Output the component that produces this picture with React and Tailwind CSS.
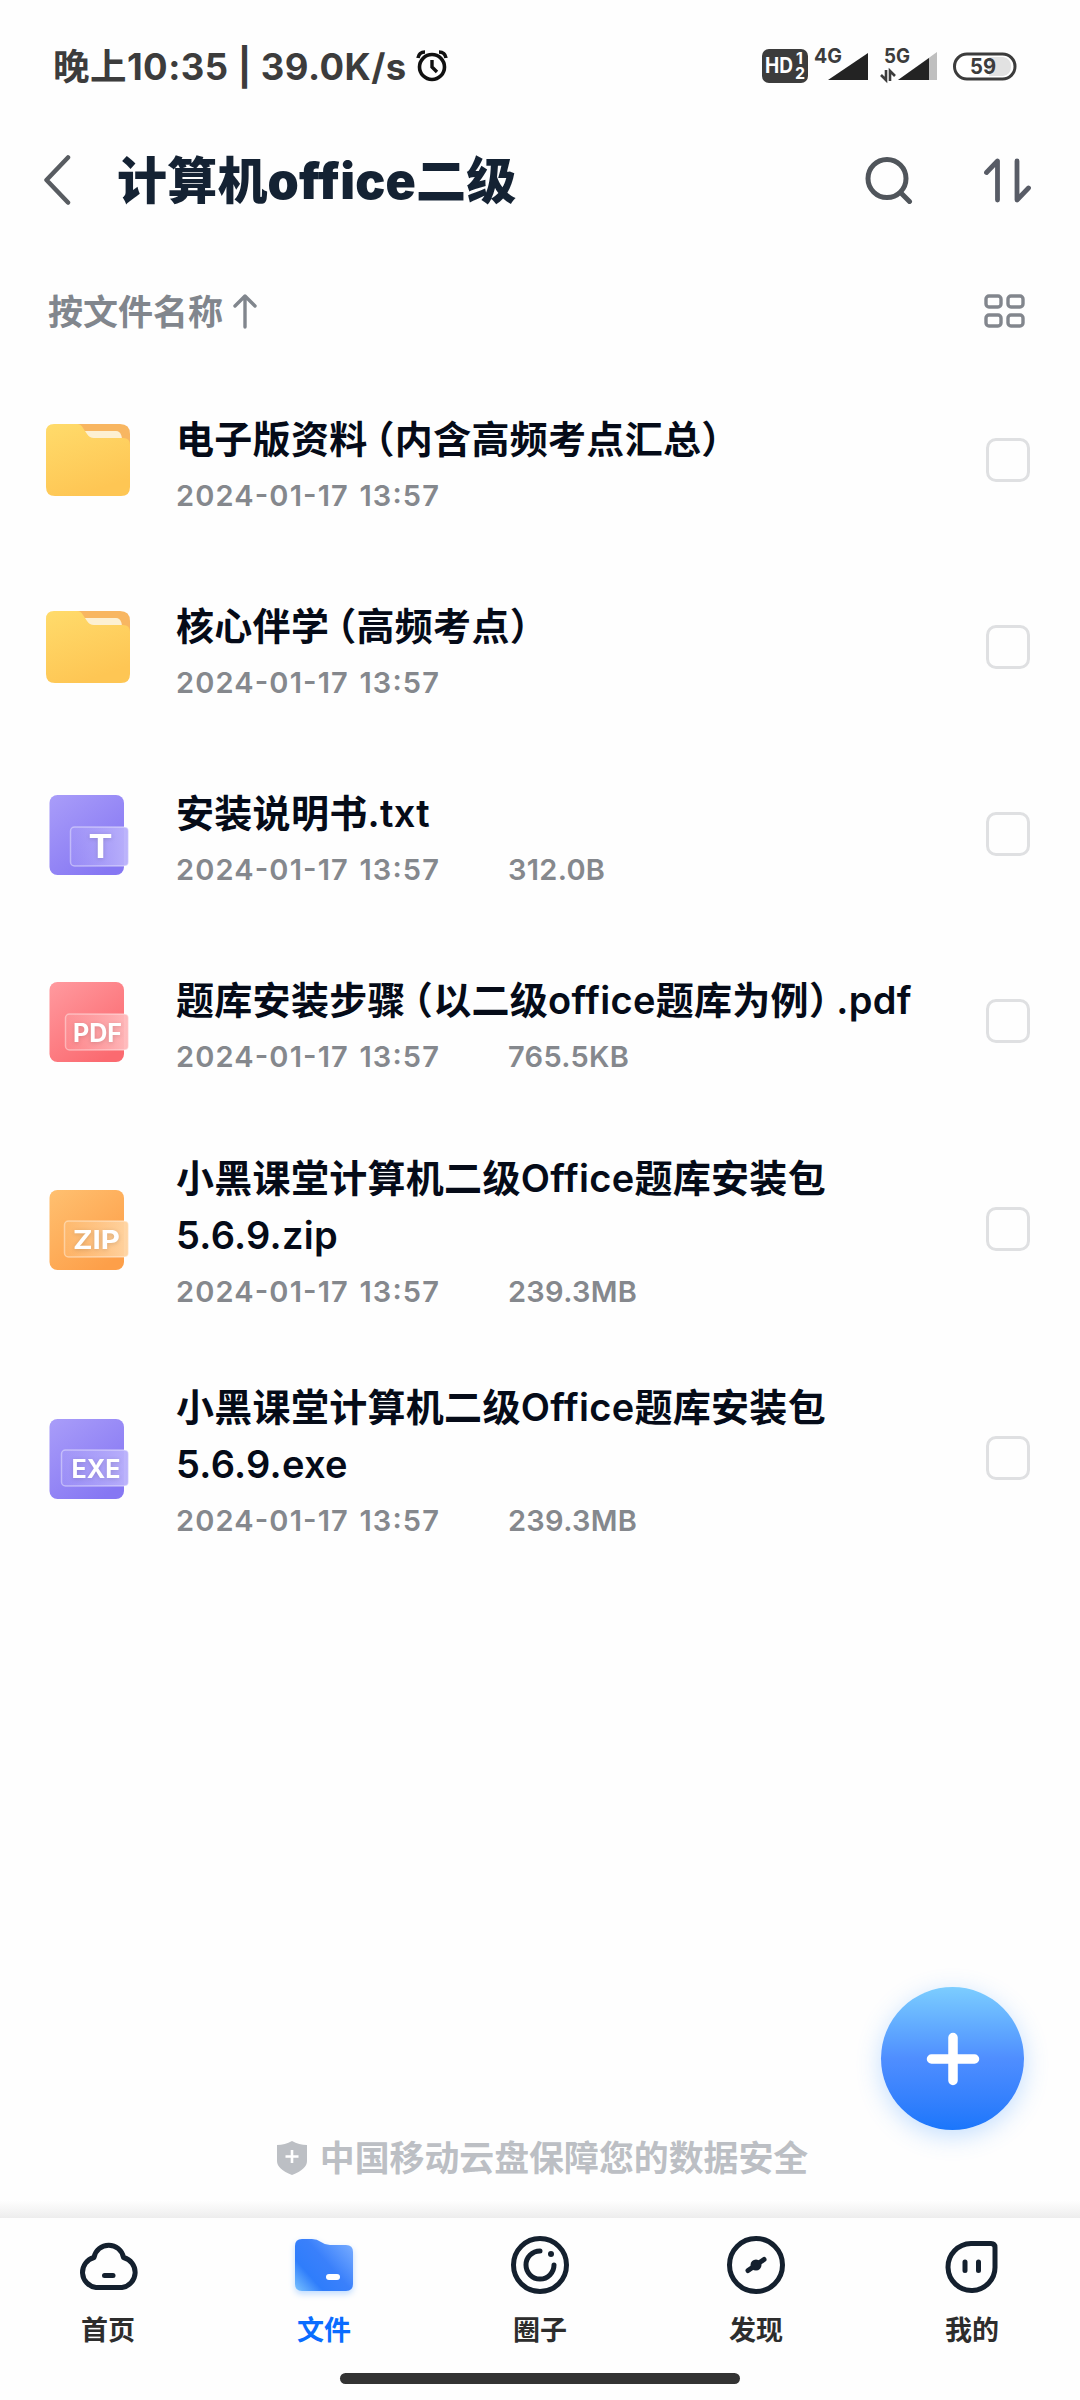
import React, { useState } from 'react';

const FILES = [
  { id: 1, type: 'folder', name: '电子版资料（内含高频考点汇总）', date: '2024-01-17 13:57' },
  { id: 2, type: 'folder', name: '核心伴学（高频考点）', date: '2024-01-17 13:57' },
  { id: 3, type: 'txt', name: '安装说明书.txt', date: '2024-01-17 13:57', size: '312.0B' },
  { id: 4, type: 'pdf', name: '题库安装步骤（以二级office题库为例）.pdf', date: '2024-01-17 13:57', size: '765.5KB' },
  { id: 5, type: 'zip', name: '小黑课堂计算机二级Office题库安装包5.6.9.zip', date: '2024-01-17 13:57', size: '239.3MB', long: true },
  { id: 6, type: 'exe', name: '小黑课堂计算机二级Office题库安装包5.6.9.exe', date: '2024-01-17 13:57', size: '239.3MB', long: true },
];

const BADGES = {
  txt: { label: 'T', from: '#a99df9', to: '#8677f3', tag: '#b9b0fb', x: 24, y: 32, w: 58, h: 39, tx: 54, ty: 63, tw: 24, fs: 32 },
  pdf: { label: 'PDF', from: '#ff9a9f', to: '#fb6a70', tag: '#ffb8ba', x: 19, y: 32, w: 63, h: 36, tx: 51, ty: 60, tw: 49, fs: 25 },
  zip: { label: 'ZIP', from: '#ffc070', to: '#fd9f49', tag: '#ffd3a0', x: 18, y: 31, w: 64, h: 36, tx: 50, ty: 59, tw: 47, fs: 26 },
  exe: { label: 'EXE', from: '#a99df9', to: '#8677f3', tag: '#b9b0fb', x: 15, y: 31, w: 67, h: 36, tx: 49.5, ty: 59, tw: 49, fs: 25 },
};

function FolderIcon() {
  return (
    <svg width="84" height="72" viewBox="0 0 84 72">
      <defs>
        <linearGradient id="folderBody" x1="0" y1="0" x2="0.4" y2="1">
          <stop offset="0" stopColor="#ffdb6b" />
          <stop offset="1" stopColor="#fec654" />
        </linearGradient>
      </defs>
      <path d="M30 0H74Q84 0 84 10V30H30Z" fill="#f8b661" />
      <path d="M38 7H70Q74 7 75.500 12L77 20H40Z" fill="#fdf0d2" />
      <path d="M8 0H31Q35 0 37 4L41 10Q43.500 14 48 14H77Q84 14 84 21V63Q84 72 75 72H9Q0 72 0 63V8Q0 0 8 0Z" fill="url(#folderBody)" />
    </svg>
  );
}

function FileIcon({ type }) {
  if (type === 'folder') return <FolderIcon />;
  const b = BADGES[type];
  return (
    <svg width="82" height="80" viewBox="0 0 82 80" className="mt-[3px] ml-[3px]">
      <defs>
        <linearGradient id={`body-${type}`} x1="0" y1="0" x2="0.7" y2="1">
          <stop offset="0" stopColor={b.from} />
          <stop offset="1" stopColor={b.to} />
        </linearGradient>
        <linearGradient id={`tag-${type}`} x1="0" y1="0" x2="1" y2="0">
          <stop offset="0" stopColor={b.tag} stopOpacity="0.2" />
          <stop offset="1" stopColor={b.tag} />
        </linearGradient>
      </defs>
      <rect x="0.500" width="74.500" height="80" rx="8" fill={`url(#body-${type})`} />
      <rect x={b.x - 2.5} y={b.y} width={b.w} height={b.h} rx="4" fill={`url(#tag-${type})`} stroke="#fff" strokeOpacity="0.4" strokeWidth="1.5" />
      <text x={b.tx - 2.5} y={b.ty} textAnchor="middle" textLength={b.tw} lengthAdjust="spacingAndGlyphs" fontSize={b.fs} fontWeight="700" fill="#fff" className="font-['Inter','Noto_Sans_CJK_SC',sans-serif] drop-shadow-sm">{b.label}</text>
    </svg>
  );
}

// Brackets use their half width forms so the name stays tight
function FileName({ text }) {
  return text.split(/([（）])/).map((part, i) => {
    if (part === '（') return <span key={i} className="ml-2 [font-feature-settings:'halt']">（</span>;
    if (part === '）') return <span key={i} className="mr-2 [font-feature-settings:'halt']">）</span>;
    return <span key={i}>{part}</span>;
  });
}

function FileRow({ file, checked, onToggle }) {
  return (
    <div className={`flex items-center pl-[46px] pr-[50px] ${file.long ? 'h-[229px]' : 'h-[187px]'}`}>
      <div className="w-[130px] shrink-0">
        <FileIcon type={file.type} />
      </div>
      <div className={`w-[745px] ${file.long ? 'pt-3' : 'pt-3.5'}`}>
        <div className="text-[38px] leading-[57px] font-semibold tracking-[0.3px] text-[#050b18]">
          <FileName text={file.name} />
        </div>
        <div className="flex text-[29px] leading-[55px] font-semibold text-[#85888d]">
          <span className="w-[332px] tracking-[1.15px] [word-spacing:2px] [font-feature-settings:'case']">{file.date}</span>
          <span className="tracking-[0.3px]">{file.size}</span>
        </div>
      </div>
      <button onClick={onToggle} className={`ml-auto size-11 rounded-[10px] border-[3px] ${checked ? 'border-[#0a6cff] bg-[#0a6cff]' : 'border-[#dfe0e2]'}`} />
    </div>
  );
}

function StatusBar() {
  return (
    <div className="flex h-[132px] items-center pl-[53px] pr-[63px] text-[#3c3c3c]">
      <span className="pt-0.5 text-[36.5px] font-bold tracking-[0.45px] whitespace-pre">晚上10:35 | 39.0K/s</span>
      <svg width="32" height="32" viewBox="0 0 32 32" fill="none" stroke="#111" className="ml-[9px]">
        <circle cx="16" cy="17" r="12.500" strokeWidth="3.600" />
        <path d="M16 10V17L21 22" strokeWidth="3.400" />
        <path d="M2 8Q3 2 9 2M23 2Q29 2 30 8" strokeWidth="3.600" />
      </svg>
      <svg width="256" height="52" viewBox="0 -8 256 52" className="ml-auto font-['Inter',sans-serif] font-bold">
        <rect x="1" y="1" width="46" height="34" rx="7" fill="#3c3c3c" />
        <text x="4" y="25" fontSize="21" textLength="28" lengthAdjust="spacingAndGlyphs" fill="#fff">HD</text>
        <text x="35" y="16" fontSize="16" fill="#fff">1</text>
        <text x="34" y="31" fontSize="16" fill="#fff">2</text>
        <text x="53" y="15" fontSize="20" textLength="28" lengthAdjust="spacingAndGlyphs" fill="#3c3c3c">4G</text>
        <path d="M67 32L107 5V32Z" fill="#232323" />
        <text x="123" y="15" fontSize="20" textLength="26" lengthAdjust="spacingAndGlyphs" fill="#3c3c3c">5G</text>
        <path d="M137 32L176 4V32Z" fill="#bfbfbf" />
        <path d="M137 32L168 10V32Z" fill="#232323" />
        <path d="M125 22V32L120 27M129 33V23L134 28" fill="none" stroke="#3c3c3c" strokeWidth="2.600" />
        <rect x="193.500" y="6" width="60.500" height="25" rx="12.500" fill="#fff" stroke="#3c3c3c" strokeWidth="3" />
        <path d="M228 9H242Q250 10 250 18.500Q250 27 242 28H228Z" fill="#e2e2e2" />
        <text x="209" y="26" fontSize="22" textLength="26" lengthAdjust="spacingAndGlyphs" fill="#3c3c3c">59</text>
      </svg>
    </div>
  );
}

function Header() {
  return (
    <div className="flex h-24 items-center pl-[43px] pr-[46px]">
      <svg width="30" height="50" viewBox="0 0 30 50" fill="none" stroke="#585c61" strokeWidth="4.500" strokeLinecap="round" strokeLinejoin="round">
        <path d="M25 2.500L3.500 25L25 47.500" />
      </svg>
      <h1 className="ml-11 pt-0.5 text-[50px] leading-none font-black tracking-[0.2px] text-[#142233]">计算机office二级</h1>
      <svg width="48" height="48" viewBox="0 0 48 48" fill="none" stroke="#50555b" strokeWidth="5" strokeLinecap="round" className="ml-auto">
        <circle cx="22" cy="22.500" r="19" />
        <path d="M36 37L44.500 45.500" />
      </svg>
      <svg width="50" height="48" viewBox="0 0 50 48" fill="none" stroke="#585c66" strokeWidth="4.800" strokeLinecap="round" strokeLinejoin="round" className="ml-[71px]">
        <path d="M2.500 16.500L13.500 5V44" />
        <path d="M33 5V44L44.500 32" />
      </svg>
    </div>
  );
}

function SortBar() {
  return (
    <div className="flex h-[138px] items-center pl-[48px] pr-[55px] pt-[28px]">
      <span className="pt-0.5 text-[35px] font-semibold text-[#81868d]">按文件名称</span>
      <svg width="26" height="36" viewBox="0 0 26 36" fill="none" stroke="#81868d" strokeWidth="3.400" strokeLinecap="round" strokeLinejoin="round" className="ml-[9px]">
        <path d="M13 34V3M3 13L13 3L23 13" />
      </svg>
      <svg width="41" height="34" viewBox="0 0 41 34" fill="none" stroke="#82868d" strokeWidth="3.400" className="ml-auto">
        <rect x="2" y="2" width="15" height="11" rx="3" />
        <rect x="24" y="2" width="15" height="11" rx="3" />
        <rect x="2" y="21" width="15" height="11" rx="3" />
        <rect x="24" y="21" width="15" height="11" rx="3" />
      </svg>
    </div>
  );
}

const NAV_ICONS = {
  home: (
    <g fill="none" stroke="#14202e" strokeWidth="5" strokeLinecap="round" strokeLinejoin="round">
      <path d="M22 56.500A15.300 15.300 0 0 1 20 26.500A15 15 0 0 1 49.500 26.500A15.300 15.300 0 0 1 48 56.500Z" />
      <path d="M30.500 44.500H39" />
    </g>
  ),
  files: (
    <g>
      <path d="M12 8H22Q27 8 31 11Q35 14 40 14H56Q63 14 63 21V53Q63 60 56 60H12Q5 60 5 53V15Q5 8 12 8Z" fill="url(#navFolder)" className="drop-shadow-md drop-shadow-blue-200" />
      <rect x="36" y="43" width="14" height="6" rx="3" fill="#fff" />
    </g>
  ),
  circle: (
    <g fill="none" stroke="#14202e" strokeWidth="5" strokeLinecap="round">
      <circle cx="34" cy="34" r="26.500" />
      <path d="M34 20A14 14 0 1 0 48 34" />
      <circle cx="45" cy="23" r="3" fill="#14202e" stroke="none" />
    </g>
  ),
  discover: (
    <g fill="none" stroke="#14202e" strokeWidth="5" strokeLinecap="round">
      <circle cx="34" cy="34" r="26.500" />
      <path d="M26 39.500L42 28.500" />
      <circle cx="34" cy="34" r="5.500" fill="#14202e" stroke="none" />
    </g>
  ),
  mine: (
    <g fill="none" stroke="#14202e" strokeWidth="5" strokeLinecap="round">
      <path d="M33 12.500H53Q57 12.500 57 16.500V35A23.500 23.500 0 1 1 33 12.500Z" />
      <path d="M27 31V39.500M40.500 31V39.500" />
    </g>
  ),
};

const TABS = [
  { key: 'home', label: '首页' },
  { key: 'files', label: '文件' },
  { key: 'circle', label: '圈子' },
  { key: 'discover', label: '发现' },
  { key: 'mine', label: '我的' },
];

function BottomNav({ active, onChange }) {
  return (
    <div>
      <div className="h-[18px] bg-gradient-to-b from-white to-[#ededed]" />
      <div className="flex h-[136px]">
        {TABS.map((t) => (
          <button key={t.key} onClick={() => onChange(t.key)} className="flex w-[216px] flex-col items-center pt-[13px]">
            <svg width="68" height="68" viewBox="0 0 68 68" className="overflow-visible">
              <defs>
                <linearGradient id="navFolder" x1="0" y1="1" x2="1" y2="0.2">
                  <stop offset="0" stopColor="#7cc4ff" />
                  <stop offset="0.3" stopColor="#2f7dfb" />
                  <stop offset="0.6" stopColor="#3a80fb" />
                  <stop offset="1" stopColor="#72a8ff" />
                </linearGradient>
              </defs>
              {NAV_ICONS[t.key]}
            </svg>
            <span className={`mt-3 text-[27px] leading-10 font-semibold ${active === t.key ? 'text-[#0a6cff]' : 'text-[#2d2d2d]'}`}>{t.label}</span>
          </button>
        ))}
      </div>
      <div className="flex h-[46px] justify-center pt-[19px]">
        <div className="h-[11px] w-[400px] rounded-full bg-[#333]" />
      </div>
    </div>
  );
}

export default function App() {
  const [checked, setChecked] = useState([]);
  const [tab, setTab] = useState('files');

  const toggle = (id) => {
    setChecked(checked.includes(id) ? checked.filter((c) => c !== id) : [...checked, id]);
  };

  return (
    <div lang="zh-CN" className="relative flex h-[2400px] w-[1080px] flex-col overflow-hidden bg-[#fefefe] font-['Inter','Noto_Sans_CJK_SC',sans-serif]">
      <StatusBar />
      <Header />
      <SortBar />

      <div className="flex flex-1 flex-col">
        {FILES.map((f) => (
          <FileRow key={f.id} file={f} checked={checked.includes(f.id)} onToggle={() => toggle(f.id)} />
        ))}

        <div className="mt-auto mb-4 flex items-center justify-center pl-1 text-[#bcbfc4]">
          <svg width="32" height="34" viewBox="0 0 32 34" className="mr-3">
            <path d="M16 0Q23 4 31 4V20Q31 28 16 34Q1 28 1 20V4Q9 4 16 0Z" fill="#bcbfc4" />
            <path d="M16 9V22M9.500 15.500H22.500" stroke="#fff" strokeWidth="2.600" />
          </svg>
          <span className="text-[34.9px] font-semibold">中国移动云盘保障您的数据安全</span>
        </div>
      </div>

      <BottomNav active={tab} onChange={setTab} />

      {/* Floating upload button */}
      <button className="absolute top-[1987px] left-[881px] flex size-[143px] items-center justify-center rounded-full bg-gradient-to-b from-[#7ccdff] via-[#4f8eff] to-[#1a76fb] shadow-[0_6px_24px_rgba(60,150,255,0.3)]">
        <svg width="54" height="54" viewBox="0 0 54 54" stroke="#fff" strokeWidth="9.500" strokeLinecap="round">
          <path d="M27 5.500V48.500M5.500 27H48.500" />
        </svg>
      </button>
    </div>
  );
}
